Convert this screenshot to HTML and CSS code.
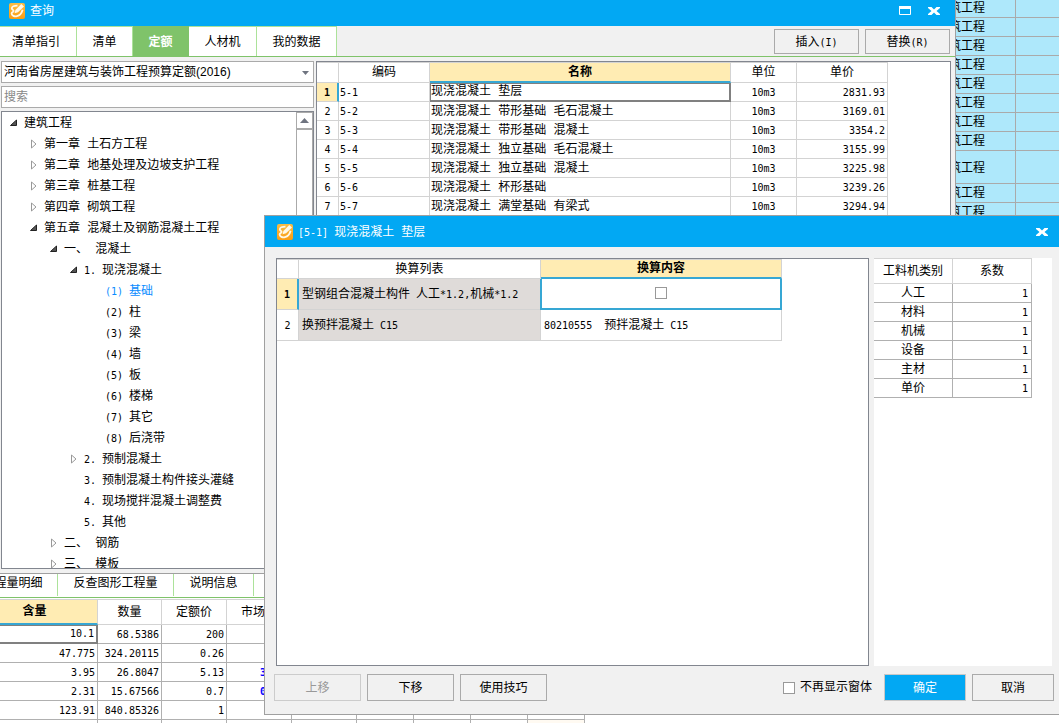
FILE: index.html
```html
<!DOCTYPE html>
<html lang="zh-CN">
<head>
<meta charset="utf-8">
<title>查询</title>
<link rel="stylesheet" href="styles.css">
</head>
<body>
<svg class="defs" aria-hidden="true">
  <defs>
    <linearGradient id="orange" x1="0" y1="0" x2="0" y2="1"><stop offset="0" stop-color="#f9bd45"/><stop offset="1" stop-color="#fb9d12"/></linearGradient>
    <symbol id="logo" viewBox="0 0 16 16">
      <rect width="16" height="16" rx="2" fill="url(#orange)"/>
      <path d="M8.500 2.600C5 2.600 2.800 3.600 2.800 5.200 2.800 6.800 4.600 6.500 4.600 8 4.600 9 2.600 9.200 2.600 10.500 2.600 12.600 5.500 13.800 8 13.200 10.500 12.600 12.800 9.800 13.600 6.800" fill="none" stroke="#fff8e8" stroke-width="1.800"/>
      <path d="M12.300 1 15 3.400 9 9.300 5.600 10.300 6.400 7Z" fill="#fff8e8"/>
    </symbol>
    <symbol id="close" viewBox="0 0 12 10"><path d="M0 1H3.500L6 3.500 8.500 1H12V2L8.500 5 12 8V9H8.500L6 6.500 3.500 9H0V8L3.500 5 0 2Z" fill="#fff"/></symbol>
    <symbol id="open" viewBox="0 0 8 10"><path d="M6.500 2V7.500H.500Z" fill="#555" stroke="#222"/></symbol>
    <symbol id="shut" viewBox="0 0 8 10"><path d="M1.500 1V9L6 5Z" fill="#fff" stroke="#999"/></symbol>
  </defs>
</svg>
<div class="desktop">
  <div class="upper">
    <main class="window">
      <header class="titlebar">
        <svg class="logo"><use href="#logo"/></svg><h1>查询</h1>
        <button class="winbtn" aria-label="最大化"><svg width="12" height="9"><path d="M.5.500H11.500V8.500H.5ZM0 2H12" fill="none" stroke="#fff"/><path d="M0 0H12V3H0Z" fill="#fff"/></svg></button>
        <button class="winbtn" aria-label="关闭"><svg width="12" height="10"><use href="#close"/></svg></button>
      </header>
      <nav class="toolbar">
        <button class="tab t1">清单指引</button><button class="tab t2">清单</button><button class="tab t2 active">定额</button><button class="tab t3">人材机</button><button class="tab t4">我的数据</button>
        <span class="tools"><button class="btn">插入<span class="n">(I)</span></button><button class="btn">替换<span class="n">(R)</span></button></span>
      </nav>
      <div class="content">
        <aside class="side">
          <div class="combo">
            <select aria-label="定额库"><option>河南省房屋建筑与装饰工程预算定额(2016)</option></select>
            <svg width="7" height="4"><path d="M0 0H7L3.500 4Z" fill="#6f7480"/></svg>
          </div>
          <input class="search" type="text" placeholder="搜索" aria-label="搜索">
          <div class="treebox">
            <ul class="tree">
              <li class="l0"><svg><use href="#open"/></svg>建筑工程</li>
              <li class="l1"><svg><use href="#shut"/></svg>第一章 土石方工程</li>
              <li class="l1"><svg><use href="#shut"/></svg>第二章 地基处理及边坡支护工程</li>
              <li class="l1"><svg><use href="#shut"/></svg>第三章 桩基工程</li>
              <li class="l1"><svg><use href="#shut"/></svg>第四章 砌筑工程</li>
              <li class="l1"><svg><use href="#open"/></svg>第五章 混凝土及钢筋混凝土工程</li>
              <li class="l2"><svg><use href="#open"/></svg>一、 混凝土</li>
              <li class="l3"><svg><use href="#open"/></svg><span class="n">1. </span>现浇混凝土</li>
              <li class="l4 chosen"><span class="n">(1) </span>基础</li>
              <li class="l4"><span class="n">(2) </span>柱</li>
              <li class="l4"><span class="n">(3) </span>梁</li>
              <li class="l4"><span class="n">(4) </span>墙</li>
              <li class="l4"><span class="n">(5) </span>板</li>
              <li class="l4"><span class="n">(6) </span>楼梯</li>
              <li class="l4"><span class="n">(7) </span>其它</li>
              <li class="l4"><span class="n">(8) </span>后浇带</li>
              <li class="l3"><svg><use href="#shut"/></svg><span class="n">2. </span>预制混凝土</li>
              <li class="l3 leaf"><span class="n">3. </span>预制混凝土构件接头灌缝</li>
              <li class="l3 leaf"><span class="n">4. </span>现场搅拌混凝土调整费</li>
              <li class="l3 leaf"><span class="n">5. </span>其他</li>
              <li class="l2"><svg><use href="#shut"/></svg>二、 钢筋</li>
              <li class="l2"><svg><use href="#shut"/></svg>三、 模板</li>
            </ul>
            <div class="scroll"><button aria-label="向上滚动"><svg width="9" height="5"><path d="M0 5H9L4.500 0Z" fill="#6f7480"/></svg></button><div class="thumb"></div></div>
          </div>
        </aside>
        <section class="panel">
          <table class="grid quota">
            <colgroup><col class="c22"><col class="c91"><col class="c301"><col class="c66"><col class="c91"></colgroup>
            <thead><tr><th></th><th>编码</th><th class="hot">名称</th><th>单位</th><th>单价</th></tr></thead>
            <tbody>
              <tr><td class="row cur">1</td><td class="n">5-1</td><td class="focus">现浇混凝土 垫层</td><td class="n mid">10m3</td><td class="n num">2831.93</td></tr>
              <tr><td class="row">2</td><td class="n">5-2</td><td>现浇混凝土 带形基础 毛石混凝土</td><td class="n mid">10m3</td><td class="n num">3169.01</td></tr>
              <tr><td class="row">3</td><td class="n">5-3</td><td>现浇混凝土 带形基础 混凝土</td><td class="n mid">10m3</td><td class="n num">3354.2</td></tr>
              <tr><td class="row">4</td><td class="n">5-4</td><td>现浇混凝土 独立基础 毛石混凝土</td><td class="n mid">10m3</td><td class="n num">3155.99</td></tr>
              <tr><td class="row">5</td><td class="n">5-5</td><td>现浇混凝土 独立基础 混凝土</td><td class="n mid">10m3</td><td class="n num">3225.98</td></tr>
              <tr><td class="row">6</td><td class="n">5-6</td><td>现浇混凝土 杯形基础</td><td class="n mid">10m3</td><td class="n num">3239.26</td></tr>
              <tr><td class="row">7</td><td class="n">5-7</td><td>现浇混凝土 满堂基础 有梁式</td><td class="n mid">10m3</td><td class="n num">3294.94</td></tr>
            </tbody>
          </table>
        </section>
      </div>
    </main>
    <div class="strip">
      <table>
        <colgroup><col class="c86"><col class="c91"></colgroup>
        <tbody>
          <tr><td>建筑工程</td><td></td></tr><tr><td>建筑工程</td><td></td></tr><tr><td>建筑工程</td><td></td></tr><tr><td>建筑工程</td><td></td></tr>
          <tr><td>建筑工程</td><td></td></tr><tr><td>建筑工程</td><td></td></tr><tr><td>建筑工程</td><td></td></tr><tr><td>建筑工程</td><td></td></tr>
          <tr class="tall"><td>建筑工程</td><td></td></tr><tr><td>建筑工程</td><td></td></tr><tr><td>建筑工程</td><td></td></tr>
        </tbody>
      </table>
    </div>
  </div>
  <section class="lower">
    <nav class="subtabs"><button class="s1">工程量明细</button><button class="s2">反查图形工程量</button><button class="s3">说明信息</button></nav>
    <table class="grid usage">
      <colgroup><col class="c126"><col class="c64"><col class="c65"><col class="c65"><col class="c65"><col class="c57"><col class="c57"><col class="c57"><col class="c57"></colgroup>
      <thead><tr><th class="hot">含量</th><th>数量</th><th>定额价</th><th>市场价</th><th></th><th></th><th></th><th></th><th></th></tr></thead>
      <tbody>
        <tr><td class="n num focus">10.1</td><td class="n num">68.5386</td><td class="n num">200</td><td></td><td></td><td></td><td></td><td></td><td></td></tr>
        <tr><td class="n num">47.775</td><td class="n num">324.20115</td><td class="n num">0.26</td><td></td><td></td><td></td><td></td><td></td><td></td></tr>
        <tr><td class="n num">3.95</td><td class="n num">26.8047</td><td class="n num">5.13</td><td class="n market">3</td><td></td><td></td><td></td><td></td><td></td></tr>
        <tr><td class="n num">2.31</td><td class="n num">15.67566</td><td class="n num">0.7</td><td class="n market">0</td><td></td><td></td><td></td><td></td><td></td></tr>
        <tr><td class="n num">123.91</td><td class="n num">840.85326</td><td class="n num">1</td><td></td><td></td><td></td><td></td><td></td><td></td></tr>
        <tr><td></td><td></td><td></td><td></td><td></td><td></td><td class="tick"><input type="checkbox" aria-label="标记"></td><td></td><td class="cream"></td></tr>
      </tbody>
    </table>
  </section>

  <div class="dialog" role="dialog" aria-labelledby="dlg">
    <header class="titlebar">
      <svg class="logo"><use href="#logo"/></svg><h2 id="dlg"><span class="n">[5-1] </span>现浇混凝土 垫层</h2>
      <button class="winbtn" aria-label="关闭"><svg width="12" height="10"><use href="#close"/></svg></button>
    </header>
    <div class="dbody">
      <section class="panel">
        <table class="grid conv">
          <colgroup><col class="c22"><col class="c242"><col class="c241"></colgroup>
          <thead><tr><th></th><th>换算列表</th><th class="hot">换算内容</th></tr></thead>
          <tbody>
            <tr><td class="row cur">1</td><td class="dim">型钢组合混凝土构件<span class="n"> </span>人工<span class="n">*1.2,</span>机械<span class="n">*1.2</span></td><td class="edit"><input type="checkbox" aria-label="启用换算"></td></tr>
            <tr><td class="row">2</td><td class="dim">换预拌混凝土<span class="n"> C15</span></td><td><span class="n">80210555&nbsp; </span>预拌混凝土<span class="n"> C15</span></td></tr>
          </tbody>
        </table>
      </section>
      <section class="factors">
        <table class="grid">
          <colgroup><col class="c79"><col class="c79"></colgroup>
          <thead><tr><th>工料机类别</th><th>系数</th></tr></thead>
          <tbody>
            <tr><td>人工</td><td class="n num">1</td></tr>
            <tr><td>材料</td><td class="n num">1</td></tr>
            <tr><td>机械</td><td class="n num">1</td></tr>
            <tr><td>设备</td><td class="n num">1</td></tr>
            <tr><td>主材</td><td class="n num">1</td></tr>
            <tr><td>单价</td><td class="n num">1</td></tr>
          </tbody>
        </table>
      </section>
    </div>
    <footer class="dfoot">
      <button class="btn" disabled>上移</button><button class="btn">下移</button><button class="btn">使用技巧</button>
      <label><input type="checkbox">不再显示窗体</label>
      <button class="btn narrow primary">确定</button><button class="btn narrow">取消</button>
    </footer>
  </div>
</div>
</body>
</html>
```
FILE: styles.css
```css
* { box-sizing: border-box; }
body { margin: 0; background: #fff; color: #000; }
body, button, input { font: 12px/16px "Liberation Mono", "Noto Sans CJK SC", monospace; }
button { padding: 2px 0 0; border: 0; background: none; color: inherit; }
h1, h2, ul { margin: 0; padding: 0; font: inherit; }
.n { font-family: "DejaVu Sans Mono", "Noto Sans CJK SC", monospace; font-size: 10px; white-space: pre; }
.defs { position: absolute; width: 0; height: 0; }

.desktop { position: relative; display: flex; flex-direction: column; height: 100vh; overflow: hidden; }
.upper { flex: 1; min-height: 0; display: flex; }
.window { flex: 1; min-width: 0; display: flex; flex-direction: column; background: #f1f1f1; }

.titlebar { flex: none; display: flex; align-items: center; height: 26px; padding: 0 9px; background: #02a8f3; color: #fff; }
.titlebar h1, .titlebar h2 { flex: 1; margin-left: 5px; padding-top: 2px; }
.titlebar .logo { width: 16px; height: 16px; }
.window > .titlebar { padding: 0 15px 5px 9px; }
.winbtn { display: flex; margin-left: 17px; padding: 0; }

.toolbar { flex: none; display: flex; height: 31px; border-bottom: 1px solid #7fc36a; }
.tab { background: #fff; border-top: 1px solid #ace29a; border-right: 1px solid #ace29a; }
.tab.active { background: #7fc36a; border-color: #7fc36a; color: #fff; font-weight: bold; }
.t1 { width: 77px; padding-right: 4px; }
.t2 { width: 56px; }
.t3 { width: 68px; }
.t4 { width: 80px; }
.tools { display: flex; gap: 6px; margin: 3px 5px 2px auto; }
.btn { width: 87px; height: 27px; border: 1px solid #aaa; background: #f1f1f1; }
.tools .btn { width: 85px; height: 25px; }

.content { flex: 1; min-height: 0; display: flex; gap: 2px; padding: 4px 4px 4px 1px; }
.side { width: 313px; display: flex; flex-direction: column; gap: 3px; }
.combo { position: relative; }
.combo select { display: block; width: 100%; height: 22px; padding: 0 2px; border: 1px solid #aaa; border-radius: 0; background: #fff; appearance: none; color: #000; font: 12px "Liberation Sans", "Noto Sans CJK SC", sans-serif; }
.combo svg { position: absolute; right: 5px; top: 10px; }
.search { height: 22px; padding: 2px 2px 0; border: 1px solid #aaa; background: #fff; }
.search::placeholder { color: #888; }
.treebox { flex: 1; min-height: 0; display: flex; border: 1px solid #82868f; background: #fff; }
.tree { flex: 1; overflow: hidden; list-style: none; padding-top: 1px; white-space: nowrap; }
.tree li { display: flex; align-items: center; height: 21px; padding-top: 1px; }
.tree svg { width: 8px; height: 10px; margin: 0 6px 2px 0; }
.l0 { padding-left: 8px; }
.l1 { padding-left: 28px; }
.l2 { padding-left: 48px; }
.l3 { padding-left: 68px; }
.l3.leaf { padding-left: 82px; }
.l4 { padding-left: 103px; }
.chosen { color: #0a8cff; }
.scroll { width: 17px; display: flex; flex-direction: column; }
.scroll button { display: flex; align-items: center; justify-content: center; height: 17px; padding: 0; border: 1px solid #aaa; }
.thumb { flex: 1; border: 1px solid #aaa; background: #fff; }

.panel { flex: 1; min-width: 0; overflow: hidden; border: 1px solid #82868f; background: #fff; }
.grid, .strip table { table-layout: fixed; width: 0; border-collapse: separate; border-spacing: 0; }
.grid th, .grid td { height: 19px; padding: 2px 1px 0; border: 0 solid #d3d3d3; border-width: 0 1px 1px 0; font-weight: normal; text-align: left; overflow: hidden; white-space: nowrap; }
.grid th { height: 21px; border-top-width: 1px; padding: 1px 0 0; text-align: center; }
.grid td.n { font-family: "DejaVu Sans Mono", "Noto Sans CJK SC", monospace; font-size: 10px; white-space: pre; }
.grid th.hot { background: #ffecb3; border-bottom: 2px solid #36a7d4; font-weight: bold; }
.grid td.row { padding: 2px 0 0; text-align: center; font-family: "DejaVu Sans Mono", monospace; font-size: 10px; }
.grid td.cur { background: #ffecb3; border-right: 2px solid #36a7d4; font-weight: bold; }
.grid td.mid { text-align: center; }
.grid td.num { text-align: right; padding-right: 2px; }
.grid td.focus { padding-top: 1px; border-right: 2px solid #808080; border-bottom: 2px solid #808080; box-shadow: inset 1px 1px #808080; }
.c22 { width: 22px; }
.c57 { width: 57px; }
.c64 { width: 64px; }
.c65 { width: 65px; }
.c66 { width: 66px; }
.c79 { width: 79px; }
.c86 { width: 86px; }
.c91 { width: 91px; }
.c126 { width: 126px; }
.c241 { width: 241px; }
.c242 { width: 242px; }
.c301 { width: 301px; }

.strip { flex: none; width: 104px; overflow: hidden; border-left: 1px solid #a0a0a0; background: #aee8fb; }
.strip table { margin: -1px 0 0 -26px; }
.strip td { height: 19px; padding: 2px 7px 0; border: 0 solid #aaa; border-width: 0 1px 1px 0; }
.strip .tall td { height: 33px; padding-top: 4px; }

.lower { flex: none; height: 150px; overflow: hidden; border-top: 1px solid #a0a0a0; background: #fff; }
.subtabs { display: flex; height: 24px; margin-bottom: 1px; border-bottom: 1px solid #7fc36a; background: #fff; }
.subtabs button { flex: none; height: 22px; border-right: 1px solid #ace29a; padding: 0 0 2px; }
.subtabs .s1 { width: 86px; margin-left: -28px; padding-right: 4px; }
.subtabs .s2 { width: 116px; }
.subtabs .s3 { width: 80px; }
.usage { margin-left: -28px; }
.usage th { height: 26px; }
.usage td { border-color: #b0b0b0; }
.usage td.market { padding-left: 33px; color: #00f; font-weight: bold; }
.usage td.cream { background: #fffaf2; }
.usage td.tick { text-align: center; vertical-align: top; padding-top: 3px; }

.dialog { position: absolute; left: 264px; right: 0; top: 215px; bottom: 8px; display: flex; flex-direction: column; border: 1px solid #a0a0a0; border-right: 0; background: #f1f1f1; }
.dialog > .titlebar { height: 31px; padding: 0 11px 0 12px; }
.dbody { flex: 1; min-height: 0; display: flex; gap: 5px; padding: 11px 7px 0 11px; }
.conv th { height: 20px; }
.grid.conv td { height: 31px; padding: 2px 3px 0; }
.conv td.dim { background: #dfdbd9; }
.grid.conv td.edit { padding: 0 3px; border-right: 2px solid #36a7d4; border-bottom: 2px solid #36a7d4; box-shadow: -1px 0 #36a7d4, inset 1px 0 #36a7d4; text-align: center; }
.factors { flex: none; width: 178px; background: #fff; }
.factors th { height: 26px; }
.factors td { border-color: #b0b0b0; text-align: center; }
.factors td.num { padding-right: 3px; }
input[type="checkbox"] { appearance: none; width: 12px; height: 12px; margin: 0; border: 1px solid #999; background: #fff; vertical-align: middle; }
.dfoot { display: flex; align-items: center; gap: 6px; padding: 8px 5px 13px 9px; }
.dfoot label { display: flex; align-items: center; gap: 5px; margin: 0 6px 0 auto; }
.btn.narrow { width: 82px; }
.btn.primary { background: #02a8f3; border-color: #c8c8c8; color: #fff; }
.btn:disabled { color: #999; border-color: #ccc; }
```
